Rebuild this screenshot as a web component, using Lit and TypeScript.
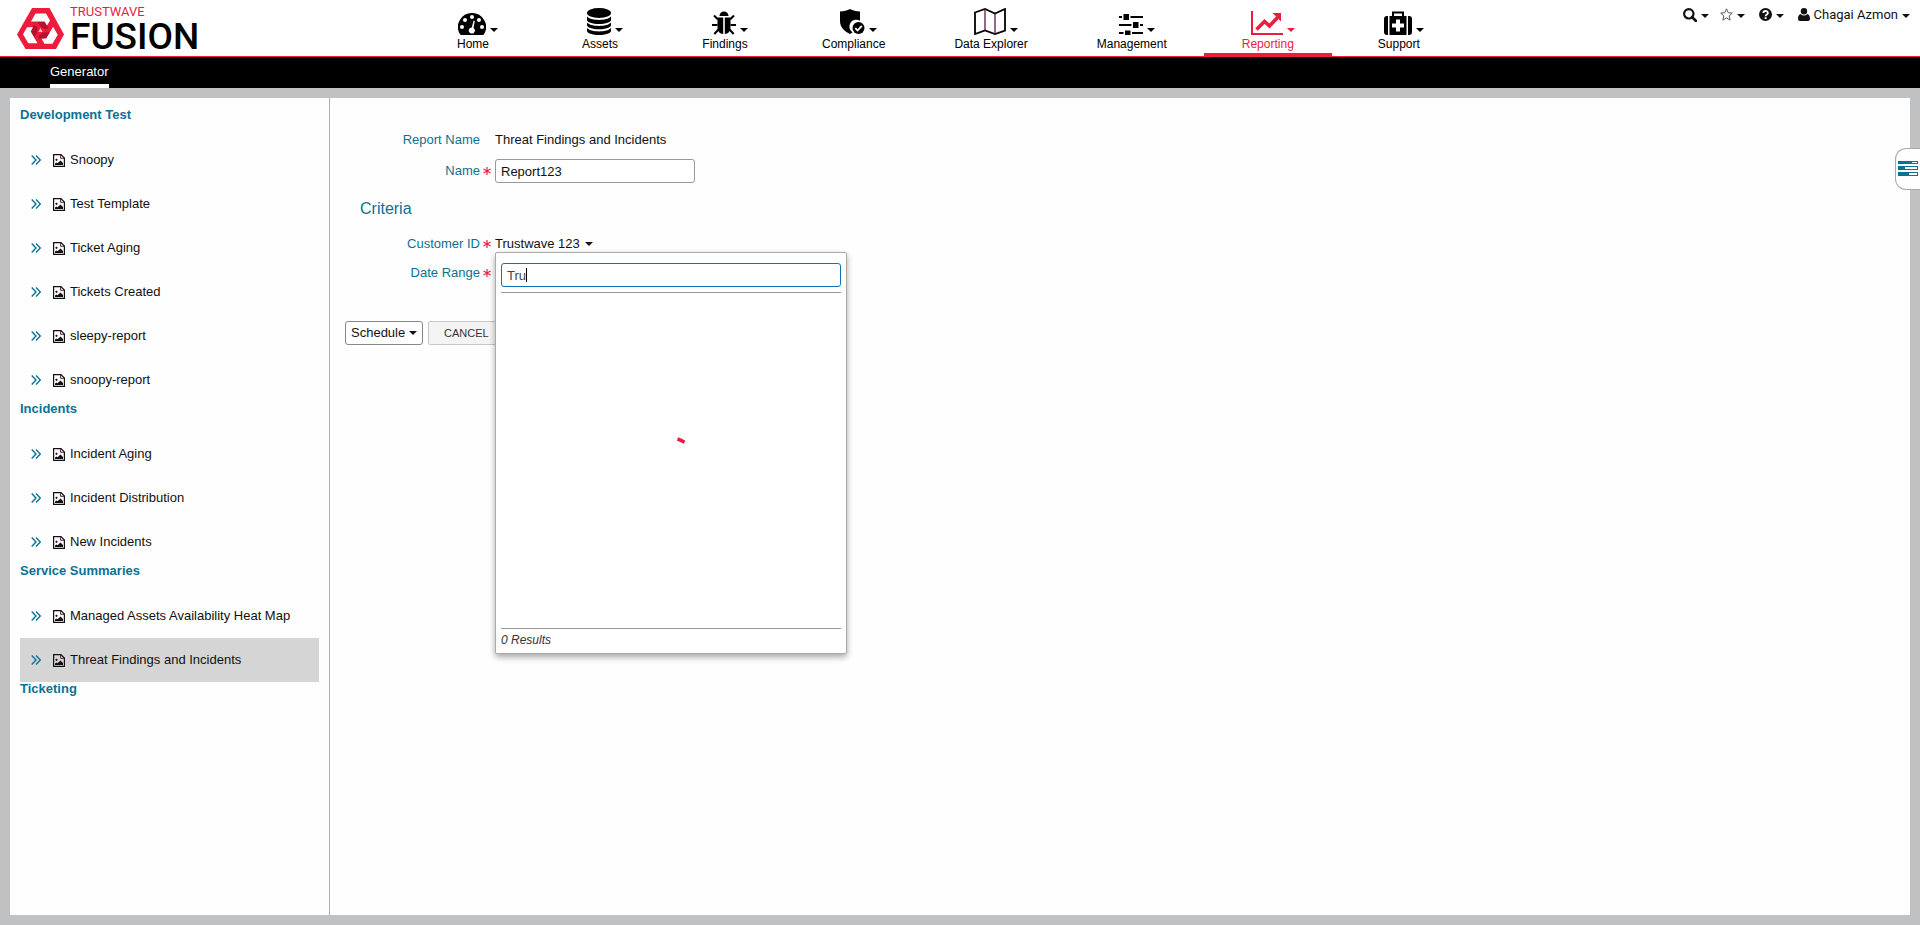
import { LitElement, html, css, svg, nothing } from "lit";
import { customElement, property, state } from "lit/decorators.js";
import { classMap } from "lit/directives/class-map.js";

const caret = html`<svg class="caret" width="8" height="4" viewBox="0 0 8 4" aria-hidden="true"><path d="M0 0h8L4 4z" fill="currentColor"/></svg>`;

const icon = (w: number, h: number, body: unknown) =>
  html`<svg width=${w} height=${h} viewBox="0 0 ${w} ${h}" fill="currentColor" aria-hidden="true">${body}</svg>`;

const icons = {
  gauge: icon(28, 22, svg`
    <path d="M14 0a14 14 0 0 1 12 21.3a1.4 1.4 0 0 1-1.2.7H3.200a1.400 1.400 0 0 1-1.200-.7A14 14 0 0 1 14 0z"/>
    <g fill="#fff"><circle cx="4" cy="14" r="2"/><circle cx="7" cy="7" r="2"/><circle cx="14" cy="4" r="2"/><circle cx="21" cy="7" r="2"/><circle cx="24" cy="14" r="2"/>
    <path d="M15.600 7.600l1.200.3-1.300 7a3.100 3.100 0 1 1-1.700-.5z"/></g>`),
  database: icon(24, 27, svg`
    <ellipse cx="12" cy="5" rx="12" ry="5"/>
    <path d="M0 8.600c2 2.400 7 3.400 12 3.400s10-1 12-3.400V12c0 2.300-5.400 4-12 4S0 14.300 0 12z"/>
    <path d="M0 14.600c2 2.400 7 3.400 12 3.400s10-1 12-3.400V17c0 2.600-5.400 4.300-12 4.300S0 19.600 0 17z"/>
    <path d="M0 20c2 2.400 7 3.400 12 3.400s10-1 12-3.400v2.700C24 25.300 18.600 27 12 27S0 25.300 0 22.700z"/>`),
  bug: icon(24, 24, svg`
    <path d="M7.500 5a4.500 4.500 0 0 1 9 0z"/>
    <path d="M5.500 6.500h5.700V23C7.500 22.800 5.500 20 5.500 16zM12.800 6.500h5.700V16c0 4-2 6.800-5.700 7z"/>
    <path d="M2 4.500l4 4M22 4.500l-4 4M0 14h5.500M18.500 14H24M6.500 18.500L2.300 23M17.500 18.500l4.200 4.500" fill="none" stroke="currentColor" stroke-width="2"/>`),
  shield: icon(25, 26, svg`
    <path d="M0 2.500C4 2.500 7 1.500 10 0c3 1.500 6 2.500 10 2.500v9.300a6.900 6.900 0 0 0-7.500 11.600L10 25C3.500 22 0 17.500 0 12z"/>
    <circle cx="18.500" cy="19" r="6"/><path d="M15.300 19.200l2.300 2.300 4.200-4.600" fill="none" stroke="#fff" stroke-width="1.800"/>`),
  map: icon(32, 27, svg`
    <path d="M1 4.500L11 1l10 4.500L31 1v21.500L21 26l-10-3.500L1 26z" fill="none" stroke="currentColor" stroke-width="1.800"/>
    <path d="M11 1v21.500M21 5.500V26" fill="none" stroke="#5a1a4a" stroke-width="1.300"/>`),
  sliders: icon(24, 21, svg`
    <path d="M0 3h24M0 11h24M0 19h24" stroke="currentColor" stroke-width="2"/>
    <path d="M3 0h8.500v6H3zM12.500 8H21v6h-8.500zM4.500 16.500H13V21H4.500z" fill="#fff"/>
    <path d="M4.500 0H10v6H4.500zM14 8h5.500v6H14zM6 16.500h5.500V21H6z"/>`),
  chart: icon(32, 24, svg`
    <path d="M1 0v23h31" fill="none" stroke="currentColor" stroke-width="2"/>
    <path d="M5.500 18.500l8-8 5 4.500 8-8.500" fill="none" stroke="currentColor" stroke-width="3.600"/><path d="M21.500 2H30v8.500z"/>`),
  medkit: icon(28, 24, svg`
    <path d="M9 5V1.500h10V5" fill="none" stroke="currentColor" stroke-width="2"/>
    <path d="M5.500 5h17v19h-17zM4 5v19H3a3 3 0 0 1-3-3V8a3 3 0 0 1 3-3zM24 5h1a3 3 0 0 1 3 3v13a3 3 0 0 1-3 3h-1z"/>
    <path d="M12 8.500h4v4h4v4h-4v4h-4v-4H8v-4h4z" fill="#fff"/>`),
  search: icon(14, 14, svg`<circle cx="5.800" cy="5.800" r="4.700" fill="none" stroke="currentColor" stroke-width="2.200"/><path d="M9 9l4 4" stroke="currentColor" stroke-width="2.600" stroke-linecap="round"/>`),
  star: icon(13, 13, svg`<path d="M6.500.8l1.700 3.900 4.100.4-3.100 2.800.9 4.200-3.600-2.200-3.600 2.200.9-4.200L.7 5.100l4.100-.4z" fill="none" stroke="#555b66" stroke-width="1"/>`),
  help: icon(13, 13, svg`<circle cx="6.500" cy="6.500" r="6.500"/><path d="M4.300 5C4.300 2.400 8.900 2.300 8.900 4.900c0 1.700-2.300 1.600-2.300 3.300" fill="none" stroke="#fff" stroke-width="1.800"/><path d="M5.600 9.200h2V11h-2z" fill="#fff"/>`),
  user: icon(12, 13, svg`<circle cx="6" cy="3.200" r="3.200"/><path d="M2.600 6a5 5 0 0 0 6.800 0C11.600 6.600 12 9 12 11a2 2 0 0 1-2 2H2a2 2 0 0 1-2-2c0-2 .4-4.400 2.600-5z"/>`),
  chevrons: icon(10, 10, svg`<path d="M.7.600L5 5 .7 9.400M5 .600L9.300 5 5 9.400" fill="none" stroke="currentColor" stroke-width="1.400"/>`),
  image: icon(12, 13, svg`
    <path d="M.6.600H8L11.400 4v8.400H.6z" fill="none" stroke="currentColor" stroke-width="1.200"/>
    <path d="M7.600.700V4.300h3.700" fill="none" stroke="#5a1a55" stroke-width="1"/>
    <path d="M2 11V9.500L3.500 8.500l1 .8L7.500 6.500 10 9v2z"/><circle cx="3.500" cy="5.800" r="1.100"/>`),
  asterisk: icon(8, 8, svg`<path d="M4 0v8M.5 2l7 4M.5 6l7-4" stroke="currentColor" stroke-width="1.200"/>`),
  panel: icon(20, 16, svg`
    <path d="M0 0h20v3H0zM0 5h20v4H0zM0 11h20v4H0z"/><path d="M14 1h5v1h-5zM7 6h12v2H7zM11 12h8v2h-8z" fill="#fff"/>`),
};

const ribbon = svg`
  <path d="M20 13.500h7.500l4 6.500-3 1.500-4-2z" fill="#b3132f"/>
  <path d="M18.500 5.500H29l4 7-3 5-2.500-4H14z" fill="#fff"/>`;
const logoMark = html`<svg width="47" height="41" viewBox="0 0 47 41" aria-hidden="true">
  <path d="M15 0h17.500L47 26.500 39 41H8.500L0 26.500z" fill="#ee1c3c"/>
  ${[0, 120, 240].map((turn) => svg`<g transform="rotate(${turn} 23.500 22.500)">${ribbon}</g>`)}
  <path d="M23.500 20l2.200 4h-4.400z" fill="#f8b4bf"/>
</svg>`;

type NavItem = { label: string; icon: unknown; active?: boolean };
const navItems: NavItem[] = [
  { label: "Home", icon: icons.gauge },
  { label: "Assets", icon: icons.database },
  { label: "Findings", icon: icons.bug },
  { label: "Compliance", icon: icons.shield },
  { label: "Data Explorer", icon: icons.map },
  { label: "Management", icon: icons.sliders },
  { label: "Reporting", icon: icons.chart, active: true },
  { label: "Support", icon: icons.medkit },
];

const reportGroups = [
  { title: "Development Test", reports: ["Snoopy", "Test Template", "Ticket Aging", "Tickets Created", "sleepy-report", "snoopy-report"] },
  { title: "Incidents", reports: ["Incident Aging", "Incident Distribution", "New Incidents"] },
  { title: "Service Summaries", reports: ["Managed Assets Availability Heat Map", "Threat Findings and Incidents"] },
  { title: "Ticketing", reports: [] },
];

const base = css`
  * { box-sizing: border-box; }
  svg { display: block; flex: none; }
  a { color: inherit; text-decoration: none; }
  button, input, select { font: inherit; color: inherit; margin: 0; }
  button { background: none; border: 0; padding: 0; cursor: pointer; }
`;

@customElement("app-header")
class AppHeader extends LitElement {
  static styles = [base, css`
    :host { display: block; }
    .top { display: flex; height: 57px; background: #fff; border-bottom: 1px solid #ee1c3c; color: #000; }
    .brand { display: flex; flex: 0 0 411px; align-items: flex-start; padding: 5px 0 0 17px; gap: 6px; font-family: Roboto, "Liberation Sans", sans-serif; }
    .mark { padding-top: 3px; }
    .words { display: flex; flex-direction: column; }
    .parent { font-size: 13px; line-height: 14px; color: #ee1c3c; }
    .product { font-size: 37px; line-height: 36px; font-weight: 500; }
    .nav { display: flex; gap: 5px; }
    .item { display: flex; flex-direction: column; align-items: center; height: 56px; padding: 0 32px; font-size: 12px; line-height: 14px; border-bottom: 3px solid transparent; }
    .item.active { color: #ee1c3c; border-bottom-color: #ee1c3c; }
    .pic { display: flex; align-items: flex-end; gap: 4px; height: 37px; padding: 0 5px 2px 15px; }
    .pic .caret { margin-bottom: 3px; }
    .tools { display: flex; align-items: flex-start; margin-left: auto; padding: 6px 10px 0 0; gap: 11px; color: #111; }
    .tool { display: flex; align-items: center; gap: 4px; height: 17px; font: 13px/17px Roboto, "Liberation Sans", sans-serif; }
    .tool .caret { margin-top: 2px; }
    .wide { margin-left: 3px; }
    .sub { display: flex; height: 31px; padding-left: 50px; background: #000; color: #fff; }
    .tab { border-bottom: 4px solid #fff; line-height: 29px; height: 31px; }
  `];

  render() {
    return html`
      <header class="top">
        <a class="brand" href="#" aria-label="Trustwave Fusion">
          <span class="mark">${logoMark}</span>
          <span class="words"><span class="parent">TRUSTWAVE</span><span class="product">FUSION</span></span>
        </a>
        <nav class="nav">
          ${navItems.map((n) => html`
            <a class=${classMap({ item: true, active: !!n.active })} href="#" aria-current=${n.active ? "page" : nothing}>
              <span class="pic">${n.icon}${caret}</span>
              <span>${n.label}</span>
            </a>`)}
        </nav>
        <div class="tools">
          <button class="tool" aria-label="Search">${icons.search}${caret}</button>
          <button class="tool" aria-label="Favorites">${icons.star}${caret}</button>
          <button class="tool wide" aria-label="Help">${icons.help}${caret}</button>
          <button class="tool wide">${icons.user}<span>Chagai Azmon</span>${caret}</button>
        </div>
      </header>
      <nav class="sub"><a class="tab" href="#" aria-current="page">Generator</a></nav>
    `;
  }
}

@customElement("report-list")
class ReportList extends LitElement {
  @property() selected = "";

  static styles = [base, css`
    :host { display: block; padding: 10px; border-right: 1px solid #b0b0b0; }
    .title { margin: 0; height: 30px; font-size: 13px; line-height: 14px; font-weight: bold; color: #0b7195; }
    .list { list-style: none; margin: 0; padding: 0; }
    .report { display: flex; align-items: center; height: 44px; padding-left: 11px; line-height: 16px; }
    .report.selected { background: #d5d5d5; }
    .chevrons { color: #0b7195; padding-right: 12px; }
    .file { padding-right: 5px; }
  `];

  render() {
    return reportGroups.map((g) => html`
      <section>
        <h2 class="title">${g.title}</h2>
        <ul class="list">
          ${g.reports.map((r) => html`
            <li><a class=${classMap({ report: true, selected: r === this.selected })} href="#">
              <span class="chevrons">${icons.chevrons}</span>
              <span class="file">${icons.image}</span>
              <span>${r}</span>
            </a></li>`)}
        </ul>
      </section>`);
  }
}

@customElement("report-form")
class ReportForm extends LitElement {
  @property() report = "";
  @state() private query = "Tru";

  static styles = [base, css`
    :host { display: block; padding: 30px 15px; }
    .row { display: grid; grid-template-columns: 135px 9px 1fr; column-gap: 3px; align-items: center; min-height: 24px; }
    .row + .row { margin-top: 7px; }
    .criteria .row + .row { margin-top: 5px; }
    .label { text-align: right; color: #0b7195; }
    .required { color: #e8243f; }
    .name { width: 200px; height: 24px; padding: 0 5px; border: 1px solid #999; border-radius: 3px; background: #fff; }
    .heading { margin: 16px 0 13px 15px; font-size: 16px; line-height: 20px; font-weight: normal; color: #0b7195; }
    .picker { position: relative; justify-self: start; }
    .trigger { display: flex; align-items: center; gap: 5px; line-height: 16px; }
    .menu { position: absolute; z-index: 2; top: 100%; left: 0; display: flex; flex-direction: column; width: 352px; height: 402px; padding: 10px 5px 0; background: #fff; border: 1px solid #a9abab; border-radius: 2px; box-shadow: 0 3px 6px rgba(0, 0, 0, 0.35); }
    .searchbox { position: relative; display: flex; }
    .search { flex: 1; height: 24px; padding: 0 5px; border: 1px solid #0a73bd; border-radius: 3px; outline: none; color: #444; caret-color: transparent; background: #fff; }
    .cursor { position: absolute; top: 5px; left: 25px; width: 1px; height: 14px; background: #000; }
    .results { display: flex; flex: 1; align-items: center; justify-content: center; margin-top: 5px; border: solid #999; border-width: 1px 0; }
    .count { padding: 3px 0 5px; font-size: 12px; line-height: 16px; font-style: italic; color: #333; }
    .actions { display: flex; gap: 5px; margin-top: 36px; }
    .schedule { display: flex; align-items: center; height: 24px; padding: 0 5px; gap: 3px; border: 1px solid #888; border-radius: 3px; background: #fff; }
    .schedule select { appearance: none; border: 0; padding: 0; background: none; outline: none; }
    .cancel { height: 24px; padding: 0 15px; font-size: 11px; background: #f4f4f4; border: 1px solid #c8c8c8; border-radius: 2px; color: #333; }
  `];

  firstUpdated() {
    this.renderRoot.querySelector<HTMLInputElement>(".search")?.focus();
  }

  private onQuery(e: Event) {
    this.query = (e.target as HTMLInputElement).value;
  }

  render() {
    const star = html`<span class="required">${icons.asterisk}</span>`;
    return html`
      <div class="row"><span class="label">Report Name</span><span></span><span>${this.report}</span></div>
      <div class="row">
        <label class="label" for="name">Name</label>${star}
        <input id="name" class="name" .value=${"Report123"} required />
      </div>
      <h2 class="heading">Criteria</h2>
      <div class="criteria">
        <div class="row">
          <label class="label" for="customer">Customer ID</label>${star}
          <div class="picker">
            <button id="customer" class="trigger" aria-haspopup="listbox" aria-expanded="true">Trustwave 123 ${caret}</button>
            <div class="menu">
              <div class="searchbox">
                <input class="search" aria-label="Search customers" .value=${this.query} @input=${this.onQuery} />
                ${this.query === "Tru" ? html`<span class="cursor"></span>` : nothing}
              </div>
              <div class="results" role="status" aria-label="Loading">
                <svg width="64" height="64" viewBox="0 0 64 64" aria-hidden="true"><path d="M38.500 10q3.600 1.200 7 3.200" fill="none" stroke="#ee1c3c" stroke-width="3.600"/></svg>
              </div>
              <div class="count">0 Results</div>
            </div>
          </div>
        </div>
        <div class="row"><span class="label">Date Range</span>${star}<span></span></div>
      </div>
      <div class="actions">
        <span class="schedule"><select aria-label="Run mode"><option>Schedule</option></select>${caret}</span>
        <button class="cancel">CANCEL</button>
      </div>
    `;
  }
}

@customElement("app-root")
class AppRoot extends LitElement {
  @state() private selected = "Threat Findings and Incidents";

  static styles = [base, css`
    :host { display: flex; flex-direction: column; min-height: 100vh; box-sizing: border-box; background: #c0c1c2; color: #111; font: 13px/16px "Liberation Sans", Arial, sans-serif; }
    .page { display: grid; grid-template-columns: 320px 1fr; flex: 1; margin: 10px; background: #fefefe; }
    .drawer { position: absolute; z-index: 3; top: 148px; right: 0; display: flex; align-items: center; width: 25px; height: 42px; padding-left: 2px; background: #fefefe; border: 1px solid #a9abab; border-right: 0; border-radius: 11px 0 0 11px; color: #0b7195; }
  `];

  render() {
    return html`
      <app-header></app-header>
      <main class="page">
        <report-list .selected=${this.selected}></report-list>
        <report-form .report=${this.selected}></report-form>
      </main>
      <button class="drawer" aria-label="Open panel">${icons.panel}</button>
    `;
  }
}
